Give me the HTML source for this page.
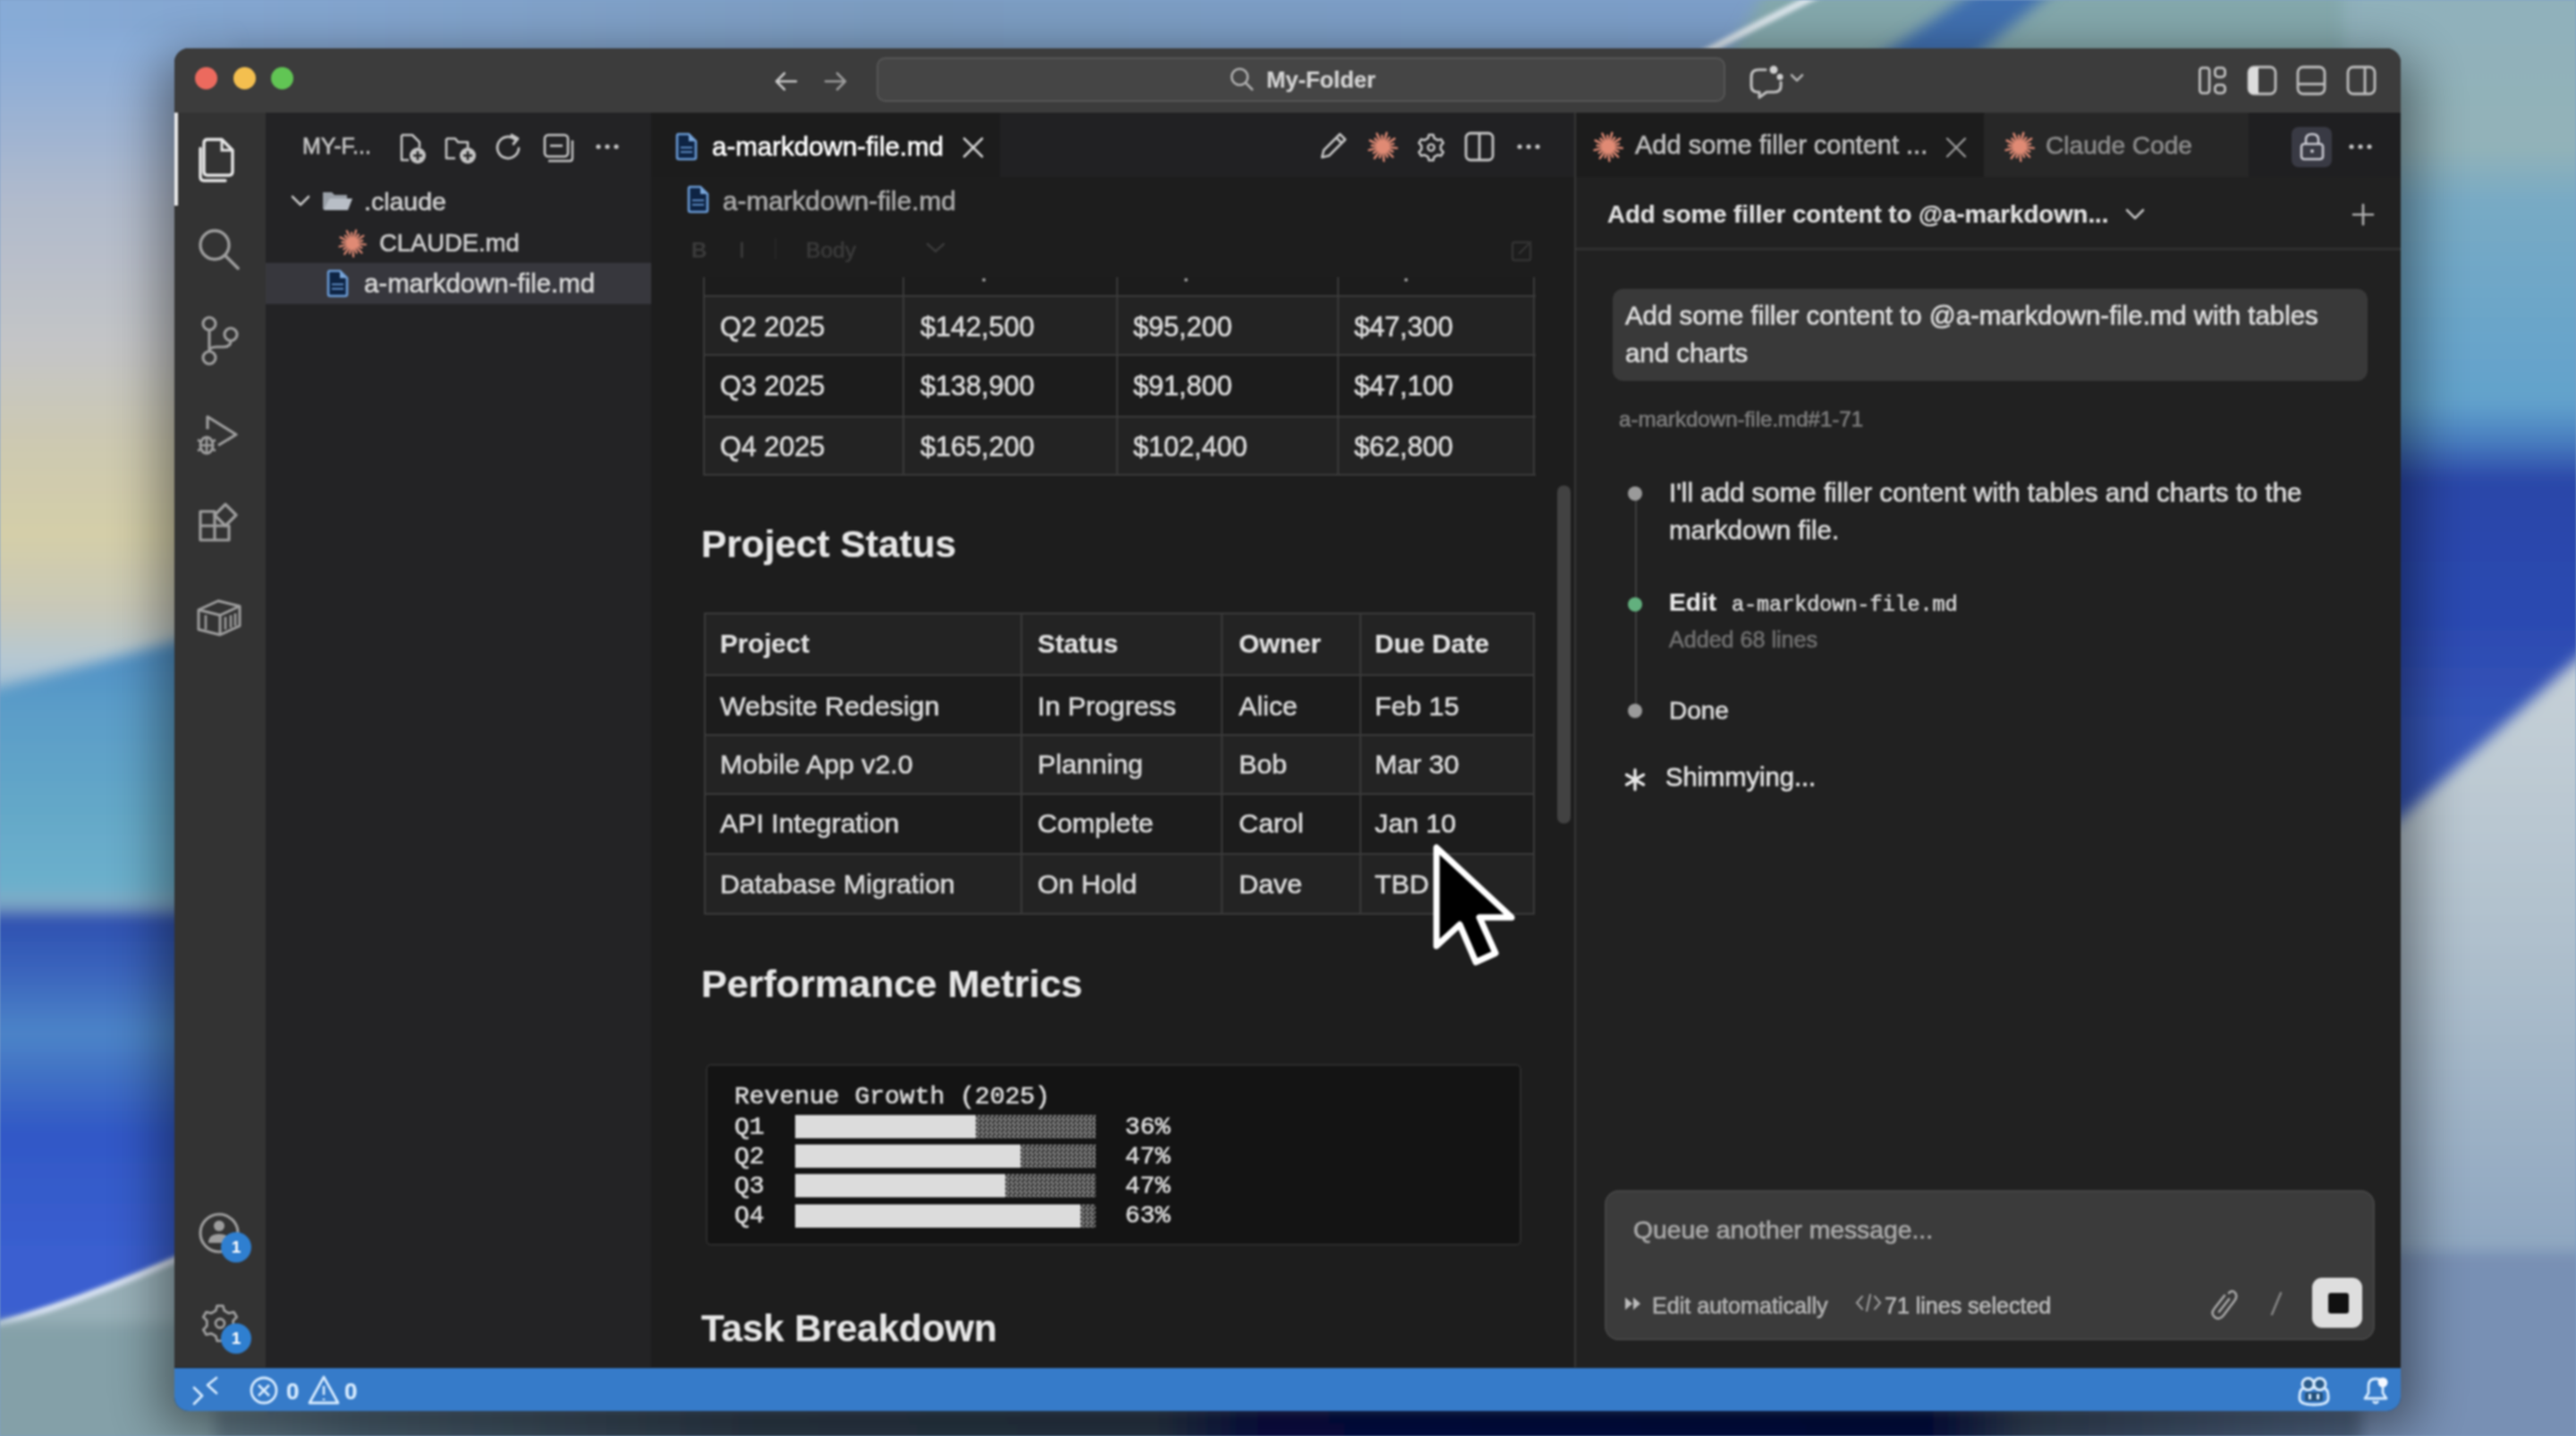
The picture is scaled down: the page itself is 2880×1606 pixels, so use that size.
<!DOCTYPE html>
<html><head><meta charset="utf-8"><title>VS Code</title>
<style>
html,body{margin:0;padding:0;width:2880px;height:1606px;overflow:hidden;background:#7fa0c8}
#wrap{position:absolute;left:0;top:0;width:2880px;height:1606px;overflow:hidden;filter:blur(0.8px)}
.r{position:absolute;display:block}
.t{position:absolute;white-space:pre;line-height:normal;-webkit-text-stroke:0.7px currentColor}
.t.b{-webkit-text-stroke:0.2px currentColor}
</style></head><body>
<div id="wrap">
<svg class="r" style="left:0;top:0" width="2880" height="1606" viewBox="0 0 2880 1606">
<defs>
<filter id="b1" x="-20%" y="-20%" width="140%" height="140%"><feGaussianBlur stdDeviation="28"/></filter>
<filter id="b2" x="-20%" y="-20%" width="140%" height="140%"><feGaussianBlur stdDeviation="8"/></filter>
<filter id="b3"><feGaussianBlur stdDeviation="2.5"/></filter>
<linearGradient id="tg" x1="0" y1="0" x2="1" y2="0">
 <stop offset="0" stop-color="#88acd8"/>
 <stop offset="0.1" stop-color="#84a6d0"/>
 <stop offset="0.35" stop-color="#7c9cc0"/>
 <stop offset="0.65" stop-color="#7c9ec8"/>
 <stop offset="1" stop-color="#7c9ec8"/>
</linearGradient>
<linearGradient id="lg" x1="0" y1="0" x2="0" y2="1">
 <stop offset="0" stop-color="#88acd8"/>
 <stop offset="0.027" stop-color="#90aed6"/>
 <stop offset="0.113" stop-color="#b0bacc"/>
 <stop offset="0.216" stop-color="#c4c5c6"/>
 <stop offset="0.284" stop-color="#cdc9b0"/>
 <stop offset="0.345" stop-color="#d4cea8"/>
 <stop offset="0.396" stop-color="#c8c8b8"/>
 <stop offset="0.433" stop-color="#b4c8d4"/>
 <stop offset="0.475" stop-color="#8ab0d0"/>
 <stop offset="1" stop-color="#8ab0d0"/>
</linearGradient>
<linearGradient id="lg2" x1="0" y1="0" x2="0" y2="1">
 <stop offset="0.02" stop-color="#4c8cc4"/>
 <stop offset="0.098" stop-color="#5a9cc8"/>
 <stop offset="0.216" stop-color="#64a8c8"/>
 <stop offset="0.299" stop-color="#6cb0cc"/>
 <stop offset="0.319" stop-color="#84aac4"/>
 <stop offset="0.333" stop-color="#2e50b0"/>
 <stop offset="0.392" stop-color="#3a64bc"/>
 <stop offset="0.461" stop-color="#4c84c8"/>
 <stop offset="0.51" stop-color="#4070c4"/>
 <stop offset="0.569" stop-color="#3158c6"/>
 <stop offset="0.706" stop-color="#3a5ed0"/>
 <stop offset="1" stop-color="#3a5ed0"/>
</linearGradient>
<linearGradient id="rg" x1="0" y1="0" x2="0" y2="1">
 <stop offset="0" stop-color="#8fb0bc"/>
 <stop offset="0.12" stop-color="#92b2b8"/>
 <stop offset="0.155" stop-color="#78aac4"/>
 <stop offset="0.288" stop-color="#62a2cc"/>
 <stop offset="0.312" stop-color="#4a80c0"/>
 <stop offset="0.34" stop-color="#2a46a8"/>
 <stop offset="0.42" stop-color="#2a48b0"/>
 <stop offset="0.50" stop-color="#3454b8"/>
 <stop offset="1" stop-color="#3454b8"/>
</linearGradient>
<linearGradient id="rg2" x1="0" y1="0" x2="0" y2="1">
 <stop offset="0" stop-color="#c8d2d8"/>
 <stop offset="0.35" stop-color="#aebfcc"/>
 <stop offset="0.7" stop-color="#8ea6c0"/>
 <stop offset="1" stop-color="#6e8cb8"/>
</linearGradient>
<linearGradient id="bg1" x1="0" y1="0" x2="1" y2="0">
 <stop offset="0" stop-color="#8aa2aa"/>
 <stop offset="0.06" stop-color="#7a94a0"/>
 <stop offset="0.15" stop-color="#4c6272"/>
 <stop offset="0.3" stop-color="#2e3c4c"/>
 <stop offset="0.45" stop-color="#2a3848"/>
 <stop offset="0.49" stop-color="#07104a"/>
 <stop offset="0.74" stop-color="#020c42"/>
 <stop offset="0.78" stop-color="#34445a"/>
 <stop offset="1" stop-color="#6a84a8"/>
</linearGradient>
</defs>
<rect x="0" y="0" width="2880" height="1606" fill="#7fa0c8"/>
<!-- top strip -->
<rect x="-40" y="-40" width="2960" height="140" fill="url(#tg)" filter="url(#b2)"/>
<path d="M1990 -40 L2920 -40 L2920 120 L1900 120 Z" fill="#84a8ac" filter="url(#b2)"/>
<path d="M2090 70 Q2180 10 2250 -40 L2330 -40 Q2260 20 2200 70 Z" fill="#4070b0" filter="url(#b2)"/>
<path d="M1900 62 Q1960 30 2040 -10" stroke="#dfe8ee" stroke-width="8" fill="none" filter="url(#b3)"/>
<!-- left strip -->
<rect x="-60" y="40" width="320" height="1620" fill="url(#lg)" filter="url(#b2)"/>
<path d="M-60 785 L300 690 L300 1700 L-60 1700 Z" fill="url(#lg2)" filter="url(#b2)"/>
<path d="M-60 1496 Q100 1460 300 1360 L300 1700 L-60 1700 Z" fill="#98b0b8" filter="url(#b3)"/>
<path d="M-60 1496 Q100 1460 300 1360" stroke="#e4ecf4" stroke-width="7" fill="none" filter="url(#b3)"/>
<!-- right strip -->
<rect x="2620" y="-40" width="320" height="1700" fill="url(#rg)" filter="url(#b2)"/>
<path d="M2600 990 L2900 720 L2900 1700 L2600 1700 Z" fill="url(#rg2)" filter="url(#b2)"/>
<!-- bottom strip -->
<rect x="-40" y="1572" width="2960" height="80" fill="url(#bg1)" filter="url(#b2)"/>
<rect x="-60" y="1480" width="300" height="200" fill="#84a0a8" filter="url(#b2)"/>
<rect x="2640" y="1400" width="300" height="300" fill="#7890b4" filter="url(#b2)"/>
<!-- window shadow -->
<rect x="178" y="62" width="2524" height="1540" rx="30" fill="#000" opacity="0.42" filter="url(#b1)"/>
</svg>
<div class="r" style="left:195px;top:54px;width:2489px;height:1524px;border-radius:16px;overflow:hidden;background:#1e1e1e">
</div>
<div class="r" style="left:195px;top:54px;width:2489px;height:72px;background:#3c3c3c;border-radius:16px 16px 0 0"></div>
<div class="r" style="left:218.0px;top:74.5px;width:25px;height:25px;border-radius:50%;background:#ec6a5e"></div>
<div class="r" style="left:260.5px;top:74.5px;width:25px;height:25px;border-radius:50%;background:#f4bf4f"></div>
<div class="r" style="left:302.5px;top:74.5px;width:25px;height:25px;border-radius:50%;background:#61c554"></div>
<svg class="r" style="left:860px;top:76px;" width="40" height="30" viewBox="0 0 40 30" fill="none"><path d="M30 15 H8 M17 6 L8 15 L17 24" stroke="#c8c8c8" stroke-width="2.6" stroke-linecap="round" stroke-linejoin="round"/></svg>
<svg class="r" style="left:915px;top:76px;" width="40" height="30" viewBox="0 0 40 30" fill="none"><path d="M8 15 H30 M21 6 L30 15 L21 24" stroke="#9a9a9a" stroke-width="2.6" stroke-linecap="round" stroke-linejoin="round"/></svg>
<div class="r" style="left:980px;top:64px;width:949px;height:50px;border-radius:10px;background:#454545;box-shadow:inset 0 0 0 2px #555"></div>
<svg class="r" style="left:1374px;top:74px;" width="30" height="30" viewBox="0 0 30 30" fill="none"><circle cx="12" cy="12" r="9" stroke="#b0b0b0" stroke-width="2.6"/><path d="M19 19 L26 26" stroke="#b0b0b0" stroke-width="2.6" stroke-linecap="round"/></svg>
<div class="t b" style="left:1416.0px;top:75.4px;font-size:25.5px;color:#d4d4d4;font-weight:700;font-family:'Liberation Sans', sans-serif;">My-Folder</div>
<svg class="r" style="left:1950px;top:68px;" width="76" height="44" viewBox="0 0 76 44" fill="none"><path d="M24 10 H16 Q8 10 8 18 V28 Q8 35 15 35 H17 L17 41 L25 35 H34 Q41 35 41 28 V24" stroke="#bdbdbd" stroke-width="3.2" stroke-linejoin="round" stroke-linecap="round"/><circle cx="33" cy="10" r="4.5" fill="#d0d0d0"/><circle cx="40" cy="18" r="3.5" fill="#d0d0d0"/><path d="M53 16 L59 22 L65 16" stroke="#b0b0b0" stroke-width="2.6" stroke-linecap="round" stroke-linejoin="round"/></svg>
<svg class="r" style="left:2456px;top:72px;" width="36" height="36" viewBox="0 0 36 36" fill="none"><rect x="3.4" y="3.9" width="10.7" height="28.2" rx="3" stroke="#bdbdbd" stroke-width="2.8"/><rect x="20.4" y="3.9" width="11.2" height="10.2" rx="3.5" stroke="#bdbdbd" stroke-width="2.8"/><rect x="20.4" y="22.9" width="11.2" height="9.2" rx="3.5" stroke="#bdbdbd" stroke-width="2.8"/></svg>
<svg class="r" style="left:2511px;top:72px;" width="36" height="36" viewBox="0 0 36 36" fill="none"><rect x="3" y="3" width="30" height="30" rx="6" stroke="#bdbdbd" stroke-width="2.8"/><path d="M9 3 H14 V33 H9 Q3 33 3 27 V9 Q3 3 9 3Z" fill="#dcdcdc"/></svg>
<svg class="r" style="left:2566px;top:72px;" width="36" height="36" viewBox="0 0 36 36" fill="none"><rect x="3" y="3" width="30" height="30" rx="6" stroke="#bdbdbd" stroke-width="2.8"/><path d="M3 22 H33" stroke="#bdbdbd" stroke-width="2.8"/></svg>
<svg class="r" style="left:2622px;top:72px;" width="36" height="36" viewBox="0 0 36 36" fill="none"><rect x="3" y="3" width="30" height="30" rx="6" stroke="#bdbdbd" stroke-width="2.8"/><path d="M22 3 V33" stroke="#bdbdbd" stroke-width="2.8"/></svg>
<div class="r" style="left:195px;top:126px;width:102px;height:1403px;background:#333333;"></div>
<div class="r" style="left:195px;top:126px;width:4px;height:104px;background:#e8e8e8;"></div>
<svg class="r" style="left:218px;top:148px;" width="52" height="60" viewBox="0 0 52 60" fill="none"><path d="M14 8 H30 L42 20 V44 Q42 48 38 48 H14 Q10 48 10 44 V12 Q10 8 14 8 Z" stroke="#e6e6e6" stroke-width="3.4" stroke-linejoin="round"/><path d="M30 8 V20 H42" stroke="#e6e6e6" stroke-width="3"/><path d="M6 18 V50 Q6 54 10 54 H34" stroke="#e6e6e6" stroke-width="3.4" stroke-linecap="round"/></svg>
<svg class="r" style="left:218px;top:252px;" width="56" height="56" viewBox="0 0 56 56" fill="none"><circle cx="22" cy="22" r="16" stroke="#9d9d9d" stroke-width="3.4"/><path d="M34 34 L48 48" stroke="#9d9d9d" stroke-width="3.6" stroke-linecap="round"/></svg>
<svg class="r" style="left:220px;top:352px;" width="50" height="60" viewBox="0 0 50 60" fill="none"><circle cx="14" cy="10" r="7" stroke="#9d9d9d" stroke-width="3.2"/><circle cx="14" cy="48" r="7" stroke="#9d9d9d" stroke-width="3.2"/><circle cx="38" cy="22" r="7" stroke="#9d9d9d" stroke-width="3.2"/><path d="M14 17 V41 M38 29 Q38 36 30 36 H22 Q14 36 14 41" stroke="#9d9d9d" stroke-width="3.2"/></svg>
<svg class="r" style="left:218px;top:460px;" width="52" height="56" viewBox="0 0 52 56" fill="none"><path d="M14 20 V6 L46 26 L26 38" stroke="#9d9d9d" stroke-width="3.2" stroke-linejoin="round"/><ellipse cx="13" cy="38" rx="7" ry="9" stroke="#9d9d9d" stroke-width="3"/><path d="M3 32 L7 34 M3 44 L7 42 M23 32 L19 34 M23 44 L19 42 M13 28 V48 M6 38 H20" stroke="#9d9d9d" stroke-width="2.6"/></svg>
<svg class="r" style="left:218px;top:558px;" width="54" height="56" viewBox="0 0 54 56" fill="none"><path d="M6 14 H22 V30 H38 V46 H6 Z M6 30 H22 V46" stroke="#9d9d9d" stroke-width="3.2" stroke-linejoin="round"/><path d="M34 6 L46 18 L34 30 L22 18 Z" stroke="#9d9d9d" stroke-width="3.2" stroke-linejoin="round"/></svg>
<svg class="r" style="left:218px;top:662px;" width="54" height="54" viewBox="0 0 54 54" fill="none"><path d="M4 20 L26 10 L50 16 V38 L28 48 L4 42 Z M4 20 L28 26 L50 16 M28 26 V48" stroke="#9d9d9d" stroke-width="3" stroke-linejoin="round"/><path d="M34 28 V42 M40 26 V40 M45 24 V38 M12 26 V42" stroke="#9d9d9d" stroke-width="2.6"/></svg>
<svg class="r" style="left:220px;top:1354px;" width="50" height="50" viewBox="0 0 50 50" fill="none"><circle cx="25" cy="25" r="21" stroke="#9d9d9d" stroke-width="3.2"/><circle cx="25" cy="17" r="6" fill="#9d9d9d"/><path d="M13 36 Q13 26 25 26 Q37 26 37 36" fill="#9d9d9d"/></svg>
<div class="r" style="left:247px;top:1378px;width:34px;height:34px;border-radius:50%;background:#2f7fd0;color:#fff;font:700 19px/34px 'Liberation Sans',sans-serif;text-align:center">1</div>
<svg class="r" style="left:219px;top:1454px;" width="54" height="54" viewBox="0 0 54 54" fill="none"><path d="M22.2 11.8 L23.7 6.3 L30.3 6.3 L31.8 11.8 L36.9 14.7 L42.4 13.3 L45.7 19.0 L41.7 23.0 L41.7 29.0 L45.7 33.0 L42.4 38.7 L36.9 37.3 L31.8 40.2 L30.3 45.7 L23.7 45.7 L22.2 40.2 L17.1 37.3 L11.6 38.7 L8.3 33.0 L12.3 29.0 L12.3 23.0 L8.3 19.0 L11.6 13.3 L17.1 14.7 Z" stroke="#9d9d9d" stroke-width="2.8" stroke-linejoin="round"/><circle cx="27" cy="26" r="5" stroke="#9d9d9d" stroke-width="2.8"/></svg>
<div class="r" style="left:247px;top:1480px;width:34px;height:34px;border-radius:50%;background:#2f7fd0;color:#fff;font:700 19px/34px 'Liberation Sans',sans-serif;text-align:center">1</div>
<div class="r" style="left:297px;top:126px;width:431px;height:1403px;background:#232325;"></div>
<div class="t" style="left:338.0px;top:149.4px;font-size:25px;color:#c2c2c2;font-weight:400;font-family:'Liberation Sans', sans-serif;">MY-F...</div>
<svg class="r" style="left:443px;top:147px;" width="36" height="38" viewBox="0 0 36 38" fill="none"><path d="M6 4 H18 L26 12 V18 M6 4 V32 H14" stroke="#c5c5c5" stroke-width="2.6" stroke-linejoin="round"/><circle cx="24" cy="27" r="9" fill="#c5c5c5"/><path d="M24 22 V32 M19 27 H29" stroke="#252526" stroke-width="2.6"/></svg>
<svg class="r" style="left:495px;top:147px;" width="40" height="38" viewBox="0 0 40 38" fill="none"><path d="M4 8 H14 L17 12 H28 V18 M4 8 V30 H14" stroke="#c5c5c5" stroke-width="2.6" stroke-linejoin="round"/><circle cx="28" cy="27" r="9" fill="#c5c5c5"/><path d="M28 22 V32 M23 27 H33" stroke="#252526" stroke-width="2.6"/></svg>
<svg class="r" style="left:552px;top:147px;" width="36" height="38" viewBox="0 0 36 38" fill="none"><path d="M28 19 A12 12 0 1 1 24 9" stroke="#c5c5c5" stroke-width="2.8" stroke-linecap="round"/><path d="M20 4 L27 8 L22 14" stroke="#c5c5c5" stroke-width="2.8" stroke-linejoin="round" stroke-linecap="round"/></svg>
<svg class="r" style="left:605px;top:147px;" width="38" height="38" viewBox="0 0 38 38" fill="none"><rect x="4" y="4" width="26" height="24" rx="4" stroke="#c5c5c5" stroke-width="2.6"/><path d="M10 16 H24" stroke="#c5c5c5" stroke-width="2.6"/><path d="M8 33 H32 Q35 33 35 30 V10" stroke="#c5c5c5" stroke-width="2.4"/></svg>
<svg class="r" style="left:664px;top:158px;" width="32" height="12" viewBox="0 0 32 12" fill="none"><circle cx="5" cy="6" r="2.6" fill="#c5c5c5"/><circle cx="15" cy="6" r="2.6" fill="#c5c5c5"/><circle cx="25" cy="6" r="2.6" fill="#c5c5c5"/></svg>
<svg class="r" style="left:322px;top:214px;" width="30" height="22" viewBox="0 0 30 22" fill="none"><path d="M5 6 L14 15 L23 6" stroke="#c5c5c5" stroke-width="2.6" stroke-linecap="round" stroke-linejoin="round"/></svg>
<svg class="r" style="left:358px;top:210px;" width="40" height="28" viewBox="0 0 40 28" fill="none"><path d="M3 5 H13 L16 8 H30 V12 H10 L6 24 H3 Z" fill="#9aa0a8"/><path d="M10 12 H36 L31 25 H4 Z" fill="#b8bec6"/></svg>
<div class="t" style="left:407.0px;top:209.2px;font-size:28.5px;color:#cccccc;font-weight:400;font-family:'Liberation Sans', sans-serif;">.claude</div>
<svg class="r" style="left:376px;top:254px;" width="36" height="36" viewBox="0 0 36 36" fill="none"><path d="M21.0 18.3 L32.9 19.5 M20.7 19.3 L28.5 23.1 M20.1 20.1 L28.5 28.7 M19.2 20.7 L22.8 28.7 M18.2 21.0 L19.1 33.0 M17.2 20.9 L14.8 29.3 M16.2 20.4 L9.2 30.2 M15.5 19.7 L8.3 24.6 M15.1 18.7 L3.5 21.7 M15.0 17.7 L6.4 16.8 M15.3 16.7 L4.5 11.5 M15.9 15.9 L9.8 9.6 M16.8 15.3 L11.8 4.3 M17.8 15.0 L17.1 6.3 M18.8 15.1 L22.1 3.6 M19.8 15.6 L24.8 8.5 M20.5 16.3 L30.4 9.6 M20.9 17.3 L29.3 15.1 " stroke="#e08a74" stroke-width="2.2" stroke-linecap="round"/><circle cx="18" cy="18" r="5.2" fill="#e08a74"/></svg>
<div class="t" style="left:424.0px;top:256.2px;font-size:27.4px;color:#cccccc;font-weight:400;font-family:'Liberation Sans', sans-serif;">CLAUDE.md</div>
<div class="r" style="left:297px;top:294px;width:431px;height:46px;background:#37373d;"></div>
<svg class="r" style="left:363px;top:300px;" width="28" height="34" viewBox="0 0 28 34" fill="none"><path d="M5 3 H17 L25 11 V29 Q25 31 23 31 H6 Q4 31 4 29 V5 Q4 3 6 3 Z" stroke="#6a9ad4" stroke-width="2.6" stroke-linejoin="round" fill="#0e2444"/><path d="M17 3 L25 11 H17 Z" fill="#7aa6d8"/><path d="M8 18 H21 M8 23 H21" stroke="#5a86bc" stroke-width="2.2"/></svg>
<div class="t" style="left:407.0px;top:300.4px;font-size:29.4px;color:#d6d6d6;font-weight:400;font-family:'Liberation Sans', sans-serif;">a-markdown-file.md</div>
<div class="r" style="left:728px;top:126px;width:1032px;height:1403px;background:#1d1d1d;"></div>
<div class="r" style="left:728px;top:126px;width:1032px;height:72px;background:#212123;"></div>
<div class="r" style="left:728px;top:126px;width:390px;height:72px;background:#1c1c1c;"></div>
<svg class="r" style="left:753px;top:147px;" width="28" height="34" viewBox="0 0 28 34" fill="none"><path d="M5 3 H17 L25 11 V29 Q25 31 23 31 H6 Q4 31 4 29 V5 Q4 3 6 3 Z" stroke="#6a9ad4" stroke-width="2.6" stroke-linejoin="round" fill="#0e2444"/><path d="M17 3 L25 11 H17 Z" fill="#7aa6d8"/><path d="M8 18 H21 M8 23 H21" stroke="#5a86bc" stroke-width="2.2"/></svg>
<div class="t" style="left:796.0px;top:147.3px;font-size:29.5px;color:#ffffff;font-weight:400;font-family:'Liberation Sans', sans-serif;">a-markdown-file.md</div>
<svg class="r" style="left:1073px;top:151px;" width="30" height="28" viewBox="0 0 30 28" fill="none"><path d="M5 4 L25 24 M25 4 L5 24" stroke="#d0d0d0" stroke-width="2.6" stroke-linecap="round"/></svg>
<svg class="r" style="left:1472px;top:146px;" width="36" height="36" viewBox="0 0 36 36" fill="none"><path d="M6 30 L8 22 L26 4 L32 10 L14 28 Z M22 8 L28 14" stroke="#c5c5c5" stroke-width="2.6" stroke-linejoin="round"/></svg>
<svg class="r" style="left:1527px;top:145px;" width="38" height="38" viewBox="0 0 38 38" fill="none"><path d="M22.2 19.3 L34.9 20.6 M21.9 20.4 L30.2 24.4 M21.2 21.3 L30.2 30.5 M20.3 21.9 L24.1 30.4 M19.2 22.2 L20.2 35.0 M18.1 22.1 L15.6 31.0 M17.1 21.6 L9.7 32.0 M16.4 20.8 L8.7 26.0 M15.9 19.8 L3.5 22.9 M15.8 18.7 L6.6 17.8 M16.1 17.6 L4.6 12.1 M16.8 16.7 L10.3 10.1 M17.7 16.1 L12.4 4.4 M18.8 15.8 L18.1 6.6 M19.9 15.9 L23.3 3.6 M20.9 16.4 L26.3 8.9 M21.6 17.2 L32.2 10.0 M22.1 18.2 L31.1 15.9 " stroke="#e08a74" stroke-width="2.4" stroke-linecap="round"/><circle cx="19" cy="19" r="5.6" fill="#e08a74"/></svg>
<svg class="r" style="left:1581px;top:146px;" width="38" height="38" viewBox="0 0 38 38" fill="none"><path d="M15.5 8.6 L16.6 4.7 L21.4 4.7 L22.5 8.6 L26.3 10.7 L30.2 9.8 L32.6 13.9 L29.8 16.8 L29.8 21.2 L32.6 24.1 L30.2 28.2 L26.3 27.3 L22.5 29.4 L21.4 33.3 L16.6 33.3 L15.5 29.4 L11.7 27.3 L7.8 28.2 L5.4 24.1 L8.2 21.2 L8.2 16.8 L5.4 13.9 L7.8 9.8 L11.7 10.7 Z" stroke="#c5c5c5" stroke-width="2.6" stroke-linejoin="round"/><circle cx="19" cy="19" r="3.6" stroke="#c5c5c5" stroke-width="2.4"/></svg>
<svg class="r" style="left:1636px;top:146px;" width="38" height="38" viewBox="0 0 38 38" fill="none"><rect x="3" y="3" width="30" height="30" rx="5" stroke="#c5c5c5" stroke-width="2.8"/><path d="M18 3 V33" stroke="#c5c5c5" stroke-width="2.8"/></svg>
<svg class="r" style="left:1694px;top:158px;" width="32" height="12" viewBox="0 0 32 12" fill="none"><circle cx="5" cy="6" r="2.6" fill="#c5c5c5"/><circle cx="15" cy="6" r="2.6" fill="#c5c5c5"/><circle cx="25" cy="6" r="2.6" fill="#c5c5c5"/></svg>
<svg class="r" style="left:766px;top:206px;" width="28" height="34" viewBox="0 0 28 34" fill="none"><path d="M5 3 H17 L25 11 V29 Q25 31 23 31 H6 Q4 31 4 29 V5 Q4 3 6 3 Z" stroke="#6a9ad4" stroke-width="2.6" stroke-linejoin="round" fill="#0e2444"/><path d="M17 3 L25 11 H17 Z" fill="#7aa6d8"/><path d="M8 18 H21 M8 23 H21" stroke="#5a86bc" stroke-width="2.2"/></svg>
<div class="t" style="left:808.0px;top:208.1px;font-size:29.7px;color:#a8a8a8;font-weight:400;font-family:'Liberation Sans', sans-serif;">a-markdown-file.md</div>
<div class="t b" style="left:773.0px;top:266.3px;font-size:24px;color:#3a3a3a;font-weight:700;font-family:'Liberation Sans', sans-serif;">B</div>
<div class="t" style="left:826.0px;top:266.3px;font-size:24px;color:#3a3a3a;font-weight:400;font-family:'Liberation Sans', sans-serif;">I</div>
<div class="r" style="left:866px;top:266px;width:2px;height:24px;background:#262626;"></div>
<div class="t" style="left:901.0px;top:265.7px;font-size:24.6px;color:#3a3a3a;font-weight:400;font-family:'Liberation Sans', sans-serif;">Body</div>
<svg class="r" style="left:1034px;top:268px;" width="24" height="18" viewBox="0 0 24 18" fill="none"><path d="M3 5 L12 13 L21 5" stroke="#3a3a3a" stroke-width="2.6" stroke-linecap="round"/></svg>
<svg class="r" style="left:1688px;top:266px;" width="30" height="28" viewBox="0 0 30 28" fill="none"><rect x="3" y="5" width="20" height="20" rx="2" stroke="#333" stroke-width="2.4"/><path d="M10 18 L24 4" stroke="#333" stroke-width="2.4"/></svg>
<div class="r" style="left:728px;top:310px;width:1020px;height:1218px;overflow:hidden">
<div class="r" style="left:59px;top:-46px;width:928px;height:67px;background:#1c1c1c;"></div>
<div class="r" style="left:59px;top:21px;width:928px;height:66px;background:#232323;"></div>
<div class="r" style="left:59px;top:87px;width:928px;height:69px;background:#1c1c1c;"></div>
<div class="r" style="left:59px;top:156px;width:928px;height:65px;background:#232323;"></div>
<div class="r" style="left:59px;top:-47px;width:930px;height:2px;background:#3a3a3a;"></div>
<div class="r" style="left:59px;top:20px;width:930px;height:2px;background:#3a3a3a;"></div>
<div class="r" style="left:59px;top:86px;width:930px;height:2px;background:#3a3a3a;"></div>
<div class="r" style="left:59px;top:155px;width:930px;height:2px;background:#3a3a3a;"></div>
<div class="r" style="left:59px;top:220px;width:930px;height:2px;background:#3a3a3a;"></div>
<div class="r" style="left:58px;top:-46px;width:2px;height:268px;background:#3a3a3a;"></div>
<div class="r" style="left:281px;top:-46px;width:2px;height:268px;background:#3a3a3a;"></div>
<div class="r" style="left:520px;top:-46px;width:2px;height:268px;background:#3a3a3a;"></div>
<div class="r" style="left:767px;top:-46px;width:2px;height:268px;background:#3a3a3a;"></div>
<div class="r" style="left:986px;top:-46px;width:2px;height:268px;background:#3a3a3a;"></div>
<div class="r" style="left:370px;top:1px;width:4px;height:4px;background:#9a9a9a;border-radius:2px"></div>
<div class="r" style="left:596px;top:1px;width:4px;height:4px;background:#9a9a9a;border-radius:2px"></div>
<div class="r" style="left:842px;top:1px;width:4px;height:4px;background:#9a9a9a;border-radius:2px"></div>
</div>
<div class="t" style="left:805.0px;top:347.9px;font-size:30.6px;color:#d8d8d8;font-weight:400;font-family:'Liberation Sans', sans-serif;">Q2 2025</div>
<div class="t" style="left:1029.0px;top:347.9px;font-size:30.6px;color:#d8d8d8;font-weight:400;font-family:'Liberation Sans', sans-serif;">$142,500</div>
<div class="t" style="left:1267.0px;top:347.9px;font-size:30.6px;color:#d8d8d8;font-weight:400;font-family:'Liberation Sans', sans-serif;">$95,200</div>
<div class="t" style="left:1514.0px;top:347.9px;font-size:30.6px;color:#d8d8d8;font-weight:400;font-family:'Liberation Sans', sans-serif;">$47,300</div>
<div class="t" style="left:805.0px;top:414.3px;font-size:30.6px;color:#d8d8d8;font-weight:400;font-family:'Liberation Sans', sans-serif;">Q3 2025</div>
<div class="t" style="left:1029.0px;top:414.3px;font-size:30.6px;color:#d8d8d8;font-weight:400;font-family:'Liberation Sans', sans-serif;">$138,900</div>
<div class="t" style="left:1267.0px;top:414.3px;font-size:30.6px;color:#d8d8d8;font-weight:400;font-family:'Liberation Sans', sans-serif;">$91,800</div>
<div class="t" style="left:1514.0px;top:414.3px;font-size:30.6px;color:#d8d8d8;font-weight:400;font-family:'Liberation Sans', sans-serif;">$47,100</div>
<div class="t" style="left:805.0px;top:482.3px;font-size:30.6px;color:#d8d8d8;font-weight:400;font-family:'Liberation Sans', sans-serif;">Q4 2025</div>
<div class="t" style="left:1029.0px;top:482.3px;font-size:30.6px;color:#d8d8d8;font-weight:400;font-family:'Liberation Sans', sans-serif;">$165,200</div>
<div class="t" style="left:1267.0px;top:482.3px;font-size:30.6px;color:#d8d8d8;font-weight:400;font-family:'Liberation Sans', sans-serif;">$102,400</div>
<div class="t" style="left:1514.0px;top:482.3px;font-size:30.6px;color:#d8d8d8;font-weight:400;font-family:'Liberation Sans', sans-serif;">$62,800</div>
<div class="t b" style="left:784.0px;top:585.4px;font-size:42.4px;color:#e6e6e6;font-weight:700;font-family:'Liberation Sans', sans-serif;">Project Status</div>
<div class="r" style="left:0;top:0;width:2880px;height:1606px">
<div class="r" style="left:788px;top:686px;width:927px;height:69px;background:#232323;"></div>
<div class="r" style="left:788px;top:755px;width:927px;height:67px;background:#1c1c1c;"></div>
<div class="r" style="left:788px;top:822px;width:927px;height:66px;background:#232323;"></div>
<div class="r" style="left:788px;top:888px;width:927px;height:67px;background:#1c1c1c;"></div>
<div class="r" style="left:788px;top:955px;width:927px;height:67px;background:#232323;"></div>
<div class="r" style="left:787px;top:685px;width:929px;height:2px;background:#3a3a3a;"></div>
<div class="r" style="left:787px;top:754px;width:929px;height:2px;background:#3a3a3a;"></div>
<div class="r" style="left:787px;top:821px;width:929px;height:2px;background:#3a3a3a;"></div>
<div class="r" style="left:787px;top:887px;width:929px;height:2px;background:#3a3a3a;"></div>
<div class="r" style="left:787px;top:954px;width:929px;height:2px;background:#3a3a3a;"></div>
<div class="r" style="left:787px;top:1021px;width:929px;height:2px;background:#3a3a3a;"></div>
<div class="r" style="left:787px;top:686px;width:2px;height:336px;background:#3a3a3a;"></div>
<div class="r" style="left:1141px;top:686px;width:2px;height:336px;background:#3a3a3a;"></div>
<div class="r" style="left:1365px;top:686px;width:2px;height:336px;background:#3a3a3a;"></div>
<div class="r" style="left:1520px;top:686px;width:2px;height:336px;background:#3a3a3a;"></div>
<div class="r" style="left:1714px;top:686px;width:2px;height:336px;background:#3a3a3a;"></div>
</div>
<div class="t b" style="left:805.0px;top:703.3px;font-size:29.5px;color:#e0e0e0;font-weight:700;font-family:'Liberation Sans', sans-serif;">Project</div>
<div class="t b" style="left:1160.0px;top:703.3px;font-size:29.5px;color:#e0e0e0;font-weight:700;font-family:'Liberation Sans', sans-serif;">Status</div>
<div class="t b" style="left:1385.0px;top:703.3px;font-size:29.5px;color:#e0e0e0;font-weight:700;font-family:'Liberation Sans', sans-serif;">Owner</div>
<div class="t b" style="left:1537.0px;top:703.3px;font-size:29.5px;color:#e0e0e0;font-weight:700;font-family:'Liberation Sans', sans-serif;">Due Date</div>
<div class="t" style="left:805.0px;top:772.6px;font-size:30.3px;color:#d8d8d8;font-weight:400;font-family:'Liberation Sans', sans-serif;">Website Redesign</div>
<div class="t" style="left:1160.0px;top:772.6px;font-size:30.3px;color:#d8d8d8;font-weight:400;font-family:'Liberation Sans', sans-serif;">In Progress</div>
<div class="t" style="left:1385.0px;top:772.6px;font-size:30.3px;color:#d8d8d8;font-weight:400;font-family:'Liberation Sans', sans-serif;">Alice</div>
<div class="t" style="left:1537.0px;top:772.6px;font-size:30.3px;color:#d8d8d8;font-weight:400;font-family:'Liberation Sans', sans-serif;">Feb 15</div>
<div class="t" style="left:805.0px;top:837.6px;font-size:30.3px;color:#d8d8d8;font-weight:400;font-family:'Liberation Sans', sans-serif;">Mobile App v2.0</div>
<div class="t" style="left:1160.0px;top:837.6px;font-size:30.3px;color:#d8d8d8;font-weight:400;font-family:'Liberation Sans', sans-serif;">Planning</div>
<div class="t" style="left:1385.0px;top:837.6px;font-size:30.3px;color:#d8d8d8;font-weight:400;font-family:'Liberation Sans', sans-serif;">Bob</div>
<div class="t" style="left:1537.0px;top:837.6px;font-size:30.3px;color:#d8d8d8;font-weight:400;font-family:'Liberation Sans', sans-serif;">Mar 30</div>
<div class="t" style="left:805.0px;top:903.6px;font-size:30.3px;color:#d8d8d8;font-weight:400;font-family:'Liberation Sans', sans-serif;">API Integration</div>
<div class="t" style="left:1160.0px;top:903.6px;font-size:30.3px;color:#d8d8d8;font-weight:400;font-family:'Liberation Sans', sans-serif;">Complete</div>
<div class="t" style="left:1385.0px;top:903.6px;font-size:30.3px;color:#d8d8d8;font-weight:400;font-family:'Liberation Sans', sans-serif;">Carol</div>
<div class="t" style="left:1537.0px;top:903.6px;font-size:30.3px;color:#d8d8d8;font-weight:400;font-family:'Liberation Sans', sans-serif;">Jan 10</div>
<div class="t" style="left:805.0px;top:971.6px;font-size:30.3px;color:#d8d8d8;font-weight:400;font-family:'Liberation Sans', sans-serif;">Database Migration</div>
<div class="t" style="left:1160.0px;top:971.6px;font-size:30.3px;color:#d8d8d8;font-weight:400;font-family:'Liberation Sans', sans-serif;">On Hold</div>
<div class="t" style="left:1385.0px;top:971.6px;font-size:30.3px;color:#d8d8d8;font-weight:400;font-family:'Liberation Sans', sans-serif;">Dave</div>
<div class="t" style="left:1537.0px;top:971.6px;font-size:30.3px;color:#d8d8d8;font-weight:400;font-family:'Liberation Sans', sans-serif;">TBD</div>
<div class="t b" style="left:784.0px;top:1075.5px;font-size:43.1px;color:#e6e6e6;font-weight:700;font-family:'Liberation Sans', sans-serif;">Performance Metrics</div>
<div class="r" style="left:789px;top:1190px;width:912px;height:203px;background:#141414;border:2px solid #2c2c2c;border-radius:6px;box-sizing:border-box"></div>
<div class="t" style="left:821.0px;top:1211.3px;font-size:28px;color:#d8d8d8;font-weight:400;font-family:'Liberation Mono', monospace;">Revenue Growth (2025)</div>
<div class="t" style="left:821.0px;top:1244.7px;font-size:28px;color:#d8d8d8;font-weight:400;font-family:'Liberation Mono', monospace;">Q1</div>
<div class="r" style="left:889px;top:1247px;width:202px;height:26px;background:#dcdcdc;"></div>
<div class="r" style="left:1091px;top:1247px;width:134px;height:26px;background:repeating-conic-gradient(#8a8a8a 0 25%, #2a2a2a 0 50%) 0 0/5px 5px;"></div>
<div class="t" style="left:1257.8px;top:1244.7px;font-size:28px;color:#d8d8d8;font-weight:400;font-family:'Liberation Mono', monospace;">36%</div>
<div class="t" style="left:821.0px;top:1277.9px;font-size:28px;color:#d8d8d8;font-weight:400;font-family:'Liberation Mono', monospace;">Q2</div>
<div class="r" style="left:889px;top:1280px;width:252px;height:26px;background:#dcdcdc;"></div>
<div class="r" style="left:1141px;top:1280px;width:84px;height:26px;background:repeating-conic-gradient(#8a8a8a 0 25%, #2a2a2a 0 50%) 0 0/5px 5px;"></div>
<div class="t" style="left:1257.8px;top:1277.9px;font-size:28px;color:#d8d8d8;font-weight:400;font-family:'Liberation Mono', monospace;">47%</div>
<div class="t" style="left:821.0px;top:1311.1px;font-size:28px;color:#d8d8d8;font-weight:400;font-family:'Liberation Mono', monospace;">Q3</div>
<div class="r" style="left:889px;top:1313px;width:235px;height:26px;background:#dcdcdc;"></div>
<div class="r" style="left:1124px;top:1313px;width:101px;height:26px;background:repeating-conic-gradient(#8a8a8a 0 25%, #2a2a2a 0 50%) 0 0/5px 5px;"></div>
<div class="t" style="left:1257.8px;top:1311.1px;font-size:28px;color:#d8d8d8;font-weight:400;font-family:'Liberation Mono', monospace;">47%</div>
<div class="t" style="left:821.0px;top:1344.3px;font-size:28px;color:#d8d8d8;font-weight:400;font-family:'Liberation Mono', monospace;">Q4</div>
<div class="r" style="left:889px;top:1347px;width:319px;height:26px;background:#dcdcdc;"></div>
<div class="r" style="left:1208px;top:1347px;width:17px;height:26px;background:repeating-conic-gradient(#8a8a8a 0 25%, #2a2a2a 0 50%) 0 0/5px 5px;"></div>
<div class="t" style="left:1257.8px;top:1344.3px;font-size:28px;color:#d8d8d8;font-weight:400;font-family:'Liberation Mono', monospace;">63%</div>
<div class="t b" style="left:784.0px;top:1462.0px;font-size:42px;color:#e6e6e6;font-weight:700;font-family:'Liberation Sans', sans-serif;">Task Breakdown</div>
<div class="r" style="left:1741px;top:543px;width:15px;height:378px;background:#424242;border-radius:7px"></div>
<svg class="r" style="left:1598px;top:940px;" width="100" height="150" viewBox="0 0 100 150" fill="none"><path d="M8 8 L8 118 L34 94 L52 136 L74 126 L56 86 L92 86 Z" fill="#000" stroke="#fff" stroke-width="7" stroke-linejoin="round"/></svg>
<div class="r" style="left:1760px;top:126px;width:2px;height:1403px;background:#363636;"></div>
<div class="r" style="left:1762px;top:126px;width:922px;height:1403px;background:#212121;"></div>
<div class="r" style="left:1762px;top:126px;width:922px;height:72px;background:#1f1f21;"></div>
<div class="r" style="left:1762px;top:126px;width:456px;height:72px;background:#1c1c1c;"></div>
<div class="r" style="left:2218px;top:126px;width:296px;height:72px;background:#272727;"></div>
<svg class="r" style="left:1779px;top:145px;" width="38" height="38" viewBox="0 0 38 38" fill="none"><path d="M22.2 19.3 L34.9 20.6 M21.9 20.4 L30.2 24.4 M21.2 21.3 L30.2 30.5 M20.3 21.9 L24.1 30.4 M19.2 22.2 L20.2 35.0 M18.1 22.1 L15.6 31.0 M17.1 21.6 L9.7 32.0 M16.4 20.8 L8.7 26.0 M15.9 19.8 L3.5 22.9 M15.8 18.7 L6.6 17.8 M16.1 17.6 L4.6 12.1 M16.8 16.7 L10.3 10.1 M17.7 16.1 L12.4 4.4 M18.8 15.8 L18.1 6.6 M19.9 15.9 L23.3 3.6 M20.9 16.4 L26.3 8.9 M21.6 17.2 L32.2 10.0 M22.1 18.2 L31.1 15.9 " stroke="#e08a74" stroke-width="2.4" stroke-linecap="round"/><circle cx="19" cy="19" r="5.6" fill="#e08a74"/></svg>
<div class="t" style="left:1828.0px;top:146.2px;font-size:29px;color:#bdbdbd;font-weight:400;font-family:'Liberation Sans', sans-serif;">Add some filler content ...</div>
<svg class="r" style="left:2172px;top:151px;" width="30" height="28" viewBox="0 0 30 28" fill="none"><path d="M5 4 L25 24 M25 4 L5 24" stroke="#9a9a9a" stroke-width="2.4" stroke-linecap="round"/></svg>
<svg class="r" style="left:2239px;top:145px;" width="38" height="38" viewBox="0 0 38 38" fill="none"><path d="M22.2 19.3 L34.9 20.6 M21.9 20.4 L30.2 24.4 M21.2 21.3 L30.2 30.5 M20.3 21.9 L24.1 30.4 M19.2 22.2 L20.2 35.0 M18.1 22.1 L15.6 31.0 M17.1 21.6 L9.7 32.0 M16.4 20.8 L8.7 26.0 M15.9 19.8 L3.5 22.9 M15.8 18.7 L6.6 17.8 M16.1 17.6 L4.6 12.1 M16.8 16.7 L10.3 10.1 M17.7 16.1 L12.4 4.4 M18.8 15.8 L18.1 6.6 M19.9 15.9 L23.3 3.6 M20.9 16.4 L26.3 8.9 M21.6 17.2 L32.2 10.0 M22.1 18.2 L31.1 15.9 " stroke="#e08a74" stroke-width="2.4" stroke-linecap="round"/><circle cx="19" cy="19" r="5.6" fill="#e08a74"/></svg>
<div class="t" style="left:2287.0px;top:146.6px;font-size:28.1px;color:#8a8a8a;font-weight:400;font-family:'Liberation Sans', sans-serif;">Claude Code</div>
<div class="r" style="left:2562px;top:142px;width:45px;height:45px;border-radius:8px;background:#393a44"></div>
<svg class="r" style="left:2568px;top:146px;" width="34" height="36" viewBox="0 0 34 36" fill="none"><rect x="5" y="15" width="24" height="17" rx="3" stroke="#c8c8d0" stroke-width="2.6"/><path d="M10 15 V10 Q10 4 17 4 Q24 4 24 10 V15" stroke="#c8c8d0" stroke-width="2.6"/><circle cx="17" cy="23" r="2" fill="#c8c8d0"/></svg>
<svg class="r" style="left:2624px;top:158px;" width="32" height="12" viewBox="0 0 32 12" fill="none"><circle cx="5" cy="6" r="2.6" fill="#c5c5c5"/><circle cx="15" cy="6" r="2.6" fill="#c5c5c5"/><circle cx="25" cy="6" r="2.6" fill="#c5c5c5"/></svg>
<div class="t b" style="left:1797.0px;top:224.0px;font-size:27.6px;color:#e0e0e0;font-weight:700;font-family:'Liberation Sans', sans-serif;">Add some filler content to @a-markdown...</div>
<svg class="r" style="left:2374px;top:230px;" width="26" height="20" viewBox="0 0 26 20" fill="none"><path d="M4 5 L13 14 L22 5" stroke="#c0c0c0" stroke-width="2.6" stroke-linecap="round" stroke-linejoin="round"/></svg>
<svg class="r" style="left:2628px;top:226px;" width="28" height="28" viewBox="0 0 28 28" fill="none"><path d="M14 3 V25 M3 14 H25" stroke="#b0b0b0" stroke-width="2.6" stroke-linecap="round"/></svg>
<div class="r" style="left:1762px;top:277px;width:922px;height:3px;background:#303030;"></div>
<div class="r" style="left:1803px;top:323px;width:844px;height:103px;border-radius:12px;background:#393939"></div>
<div class="t" style="left:1817.0px;top:336.4px;font-size:29.4px;color:#dcdcdc;font-weight:400;font-family:'Liberation Sans', sans-serif;">Add some filler content to @a-markdown-file.md with tables</div>
<div class="t" style="left:1817.0px;top:378.4px;font-size:29.4px;color:#dcdcdc;font-weight:400;font-family:'Liberation Sans', sans-serif;">and charts</div>
<div class="t" style="left:1810.0px;top:454.7px;font-size:24.1px;color:#7a7a7a;font-weight:400;font-family:'Liberation Sans', sans-serif;">a-markdown-file.md#1-71</div>
<div class="r" style="left:1828px;top:552px;width:2px;height:243px;background:#3e3e3e;"></div>
<div class="r" style="left:1820px;top:544px;width:16px;height:16px;border-radius:50%;background:#9a9a9a"></div>
<div class="r" style="left:1820px;top:668px;width:16px;height:16px;border-radius:50%;background:#62b07e"></div>
<div class="r" style="left:1820px;top:787px;width:16px;height:16px;border-radius:50%;background:#9a9a9a"></div>
<div class="t" style="left:1866.0px;top:534.3px;font-size:29.5px;color:#d8d8d8;font-weight:400;font-family:'Liberation Sans', sans-serif;">I'll add some filler content with tables and charts to the</div>
<div class="t" style="left:1866.0px;top:576.3px;font-size:29.5px;color:#d8d8d8;font-weight:400;font-family:'Liberation Sans', sans-serif;">markdown file.</div>
<div class="t b" style="left:1866.0px;top:657.6px;font-size:28.1px;color:#e8e8e8;font-weight:700;font-family:'Liberation Sans', sans-serif;">Edit</div>
<div class="t" style="left:1936.0px;top:663.5px;font-size:23.4px;color:#d0d0d0;font-weight:400;font-family:'Liberation Mono', monospace;">a-markdown-file.md</div>
<div class="t" style="left:1866.0px;top:700.9px;font-size:25.1px;color:#6e6e6e;font-weight:400;font-family:'Liberation Sans', sans-serif;">Added 68 lines</div>
<div class="t" style="left:1866.0px;top:778.7px;font-size:28px;color:#d8d8d8;font-weight:400;font-family:'Liberation Sans', sans-serif;">Done</div>
<svg class="r" style="left:1814px;top:858px;" width="28" height="28" viewBox="0 0 28 28" fill="none"><path d="M14 3 V25 M4.5 8.5 L23.5 19.5 M23.5 8.5 L4.5 19.5" stroke="#e8e8e8" stroke-width="3.4" stroke-linecap="round"/></svg>
<div class="t" style="left:1862.0px;top:852.7px;font-size:29.1px;color:#e0e0e0;font-weight:400;font-family:'Liberation Sans', sans-serif;">Shimmying...</div>
<div class="r" style="left:1794px;top:1331px;width:861px;height:168px;border-radius:16px;background:#3b3b3b;box-shadow:inset 0 0 0 2px #444"></div>
<div class="t" style="left:1826.0px;top:1359.4px;font-size:28.3px;color:#a8a8a8;font-weight:400;font-family:'Liberation Sans', sans-serif;">Queue another message...</div>
<svg class="r" style="left:1814px;top:1448px;" width="26" height="20" viewBox="0 0 26 20" fill="none"><path d="M3 3 L11 10 L3 17 Z M12 3 L20 10 L12 17 Z" fill="#bbbbbb"/></svg>
<div class="t" style="left:1847.0px;top:1446.3px;font-size:25.1px;color:#b0b0b0;font-weight:400;font-family:'Liberation Sans', sans-serif;">Edit automatically</div>
<svg class="r" style="left:2074px;top:1446px;" width="30" height="22" viewBox="0 0 30 22" fill="none"><path d="M8 4 L2 11 L8 18 M22 4 L28 11 L22 18 M17 2 L13 20" stroke="#9a9a9a" stroke-width="2.2" stroke-linecap="round"/></svg>
<div class="t" style="left:2107.0px;top:1446.4px;font-size:25px;color:#b8b8b8;font-weight:400;font-family:'Liberation Sans', sans-serif;">71 lines selected</div>
<svg class="r" style="left:2468px;top:1440px;" width="34" height="36" viewBox="0 0 34 36" fill="none"><path d="M24 6 Q28 2 31 6 Q34 10 30 15 L18 31 Q13 37 8 33 Q3 29 8 23 L19 9 M24 13 L13 27" stroke="#a8a8a8" stroke-width="2.6" stroke-linecap="round" fill="none"/></svg>
<svg class="r" style="left:2534px;top:1442px;" width="22" height="32" viewBox="0 0 22 32" fill="none"><path d="M16 4 L6 28" stroke="#888" stroke-width="2.4" stroke-linecap="round"/></svg>
<div class="r" style="left:2585px;top:1429px;width:56px;height:56px;border-radius:11px;background:#dedede"></div>
<div class="r" style="left:2603px;top:1446px;width:23px;height:23px;border-radius:3px;background:#111"></div>
<div class="r" style="left:195px;top:1530px;width:2489px;height:48px;background:#367bc9;border-radius:0 0 16px 16px"></div>
<svg class="r" style="left:212px;top:1536px;" width="34" height="38" viewBox="0 0 34 38" fill="none"><path d="M5 34 L14 25 L5 16 M30 5 L20 13 L30 22" stroke="#d8ecff" stroke-width="2.8" stroke-linecap="round" stroke-linejoin="round"/></svg>
<svg class="r" style="left:278px;top:1538px;" width="36" height="36" viewBox="0 0 36 36" fill="none"><circle cx="17" cy="17" r="14" stroke="#d8ecff" stroke-width="2.8"/><path d="M11 11 L23 23 M23 11 L11 23" stroke="#d8ecff" stroke-width="2.8"/></svg>
<div class="t b" style="left:320.0px;top:1540.5px;font-size:26px;color:#d8ecff;font-weight:700;font-family:'Liberation Sans', sans-serif;">0</div>
<svg class="r" style="left:343px;top:1536px;" width="38" height="38" viewBox="0 0 38 38" fill="none"><path d="M19 4 L35 33 H3 Z" stroke="#d8ecff" stroke-width="2.8" stroke-linejoin="round"/><path d="M19 14 V24 M19 28 V30" stroke="#d8ecff" stroke-width="2.6"/></svg>
<div class="t b" style="left:385.0px;top:1540.5px;font-size:26px;color:#d8ecff;font-weight:700;font-family:'Liberation Sans', sans-serif;">0</div>
<svg class="r" style="left:2566px;top:1537px;" width="42" height="38" viewBox="0 0 42 38" fill="none"><path d="M5 24 Q5 15 12 15 H30 Q37 15 37 24 V27 Q37 34 21 34 Q5 34 5 27 Z" stroke="#d8ecff" stroke-width="3"/><circle cx="14.5" cy="11" r="6.5" stroke="#d8ecff" stroke-width="3" fill="#2a5a88"/><circle cx="27.5" cy="11" r="6.5" stroke="#d8ecff" stroke-width="3" fill="#2a5a88"/><rect x="11" y="20" width="20" height="10" rx="2" fill="#24507a"/><rect x="15" y="22" width="3" height="6" fill="#d8ecff"/><rect x="24" y="22" width="3" height="6" fill="#d8ecff"/></svg>
<svg class="r" style="left:2636px;top:1534px;" width="40" height="40" viewBox="0 0 40 40" fill="none"><path d="M8 30 H32 L28 24 V16 Q28 8 20 8 Q12 8 12 16 V24 Z M17 33 Q20 37 23 33" stroke="#d8ecff" stroke-width="2.8" stroke-linejoin="round"/><circle cx="28" cy="12" r="5.5" fill="#f4f8ff"/></svg>
</div></body></html>
